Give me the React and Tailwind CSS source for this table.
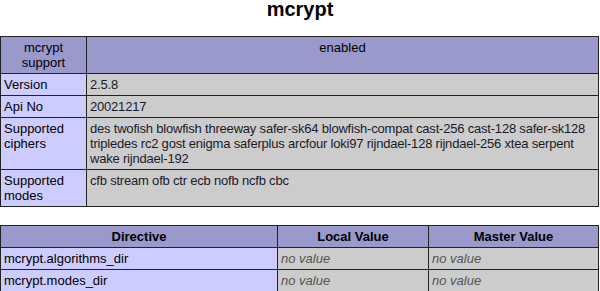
const info = [
  ["Version", "2.5.8"],
  ["Api No", "20021217"],
  [
    "Supported ciphers",
    "des twofish blowfish threeway safer-sk64 blowfish-compat cast-256 cast-128 safer-sk128 tripledes rc2 gost enigma saferplus arcfour loki97 rijndael-128 rijndael-256 xtea serpent wake rijndael-192",
  ],
  ["Supported modes", "cfb stream ofb ctr ecb nofb ncfb cbc"],
];

const directives = ["mcrypt.algorithms_dir", "mcrypt.modes_dir"];

export default function App() {
  return (
    <div className="w-[600px] h-[291px] overflow-hidden bg-white text-black font-['Liberation_Sans',Arial,sans-serif] text-[13px] leading-[15px]">
      <div className="h-[36px] text-center text-[20px] leading-[22px] -mt-[2px] pb-[2px] box-content font-bold">mcrypt</div>

      {/* module info */}
      <table className="w-[599px] table-fixed border-collapse">
        <colgroup>
          <col className="w-[86px]" />
          <col />
        </colgroup>
        <thead>
          <tr>
            <th className="bg-[#9999cc] border border-[#222] px-[3px] py-[3px] font-normal align-top">mcrypt support</th>
            <th className="bg-[#9999cc] border border-[#222] px-[3px] py-[3px] font-normal align-top">enabled</th>
          </tr>
        </thead>
        <tbody>
          {info.map(([k, v]) => (
            <tr key={k}>
              <td className="bg-[#ccccff] border border-[#222] px-[3px] py-[3px] align-top">{k}</td>
              <td className="bg-[#cccccc] border border-[#222] px-[3px] py-[3px] align-top tracking-[-0.2px] text-[#1a1a2a]">{v}</td>
            </tr>
          ))}
        </tbody>
      </table>

      {/* ini directives */}
      <table className="mt-[18px] w-[599px] table-fixed border-collapse">
        <colgroup>
          <col className="w-[277px]" />
          <col className="w-[151px]" />
          <col />
        </colgroup>
        <thead>
          <tr>
            <th className="bg-[#9999cc] border border-[#222] px-[3px] py-[3px] font-bold">Directive</th>
            <th className="bg-[#9999cc] border border-[#222] px-[3px] py-[3px] font-bold">Local Value</th>
            <th className="bg-[#9999cc] border border-[#222] px-[3px] py-[3px] font-bold">Master Value</th>
          </tr>
        </thead>
        <tbody>
          {directives.map((d) => (
            <tr key={d}>
              <td className="bg-[#ccccff] border border-[#222] px-[3px] py-[3px]">{d}</td>
              <td className="bg-[#cccccc] border border-[#222] px-[3px] py-[3px] italic text-[#555]">no value</td>
              <td className="bg-[#cccccc] border border-[#222] px-[3px] py-[3px] italic text-[#555]">no value</td>
            </tr>
          ))}
        </tbody>
      </table>
    </div>
  );
}
